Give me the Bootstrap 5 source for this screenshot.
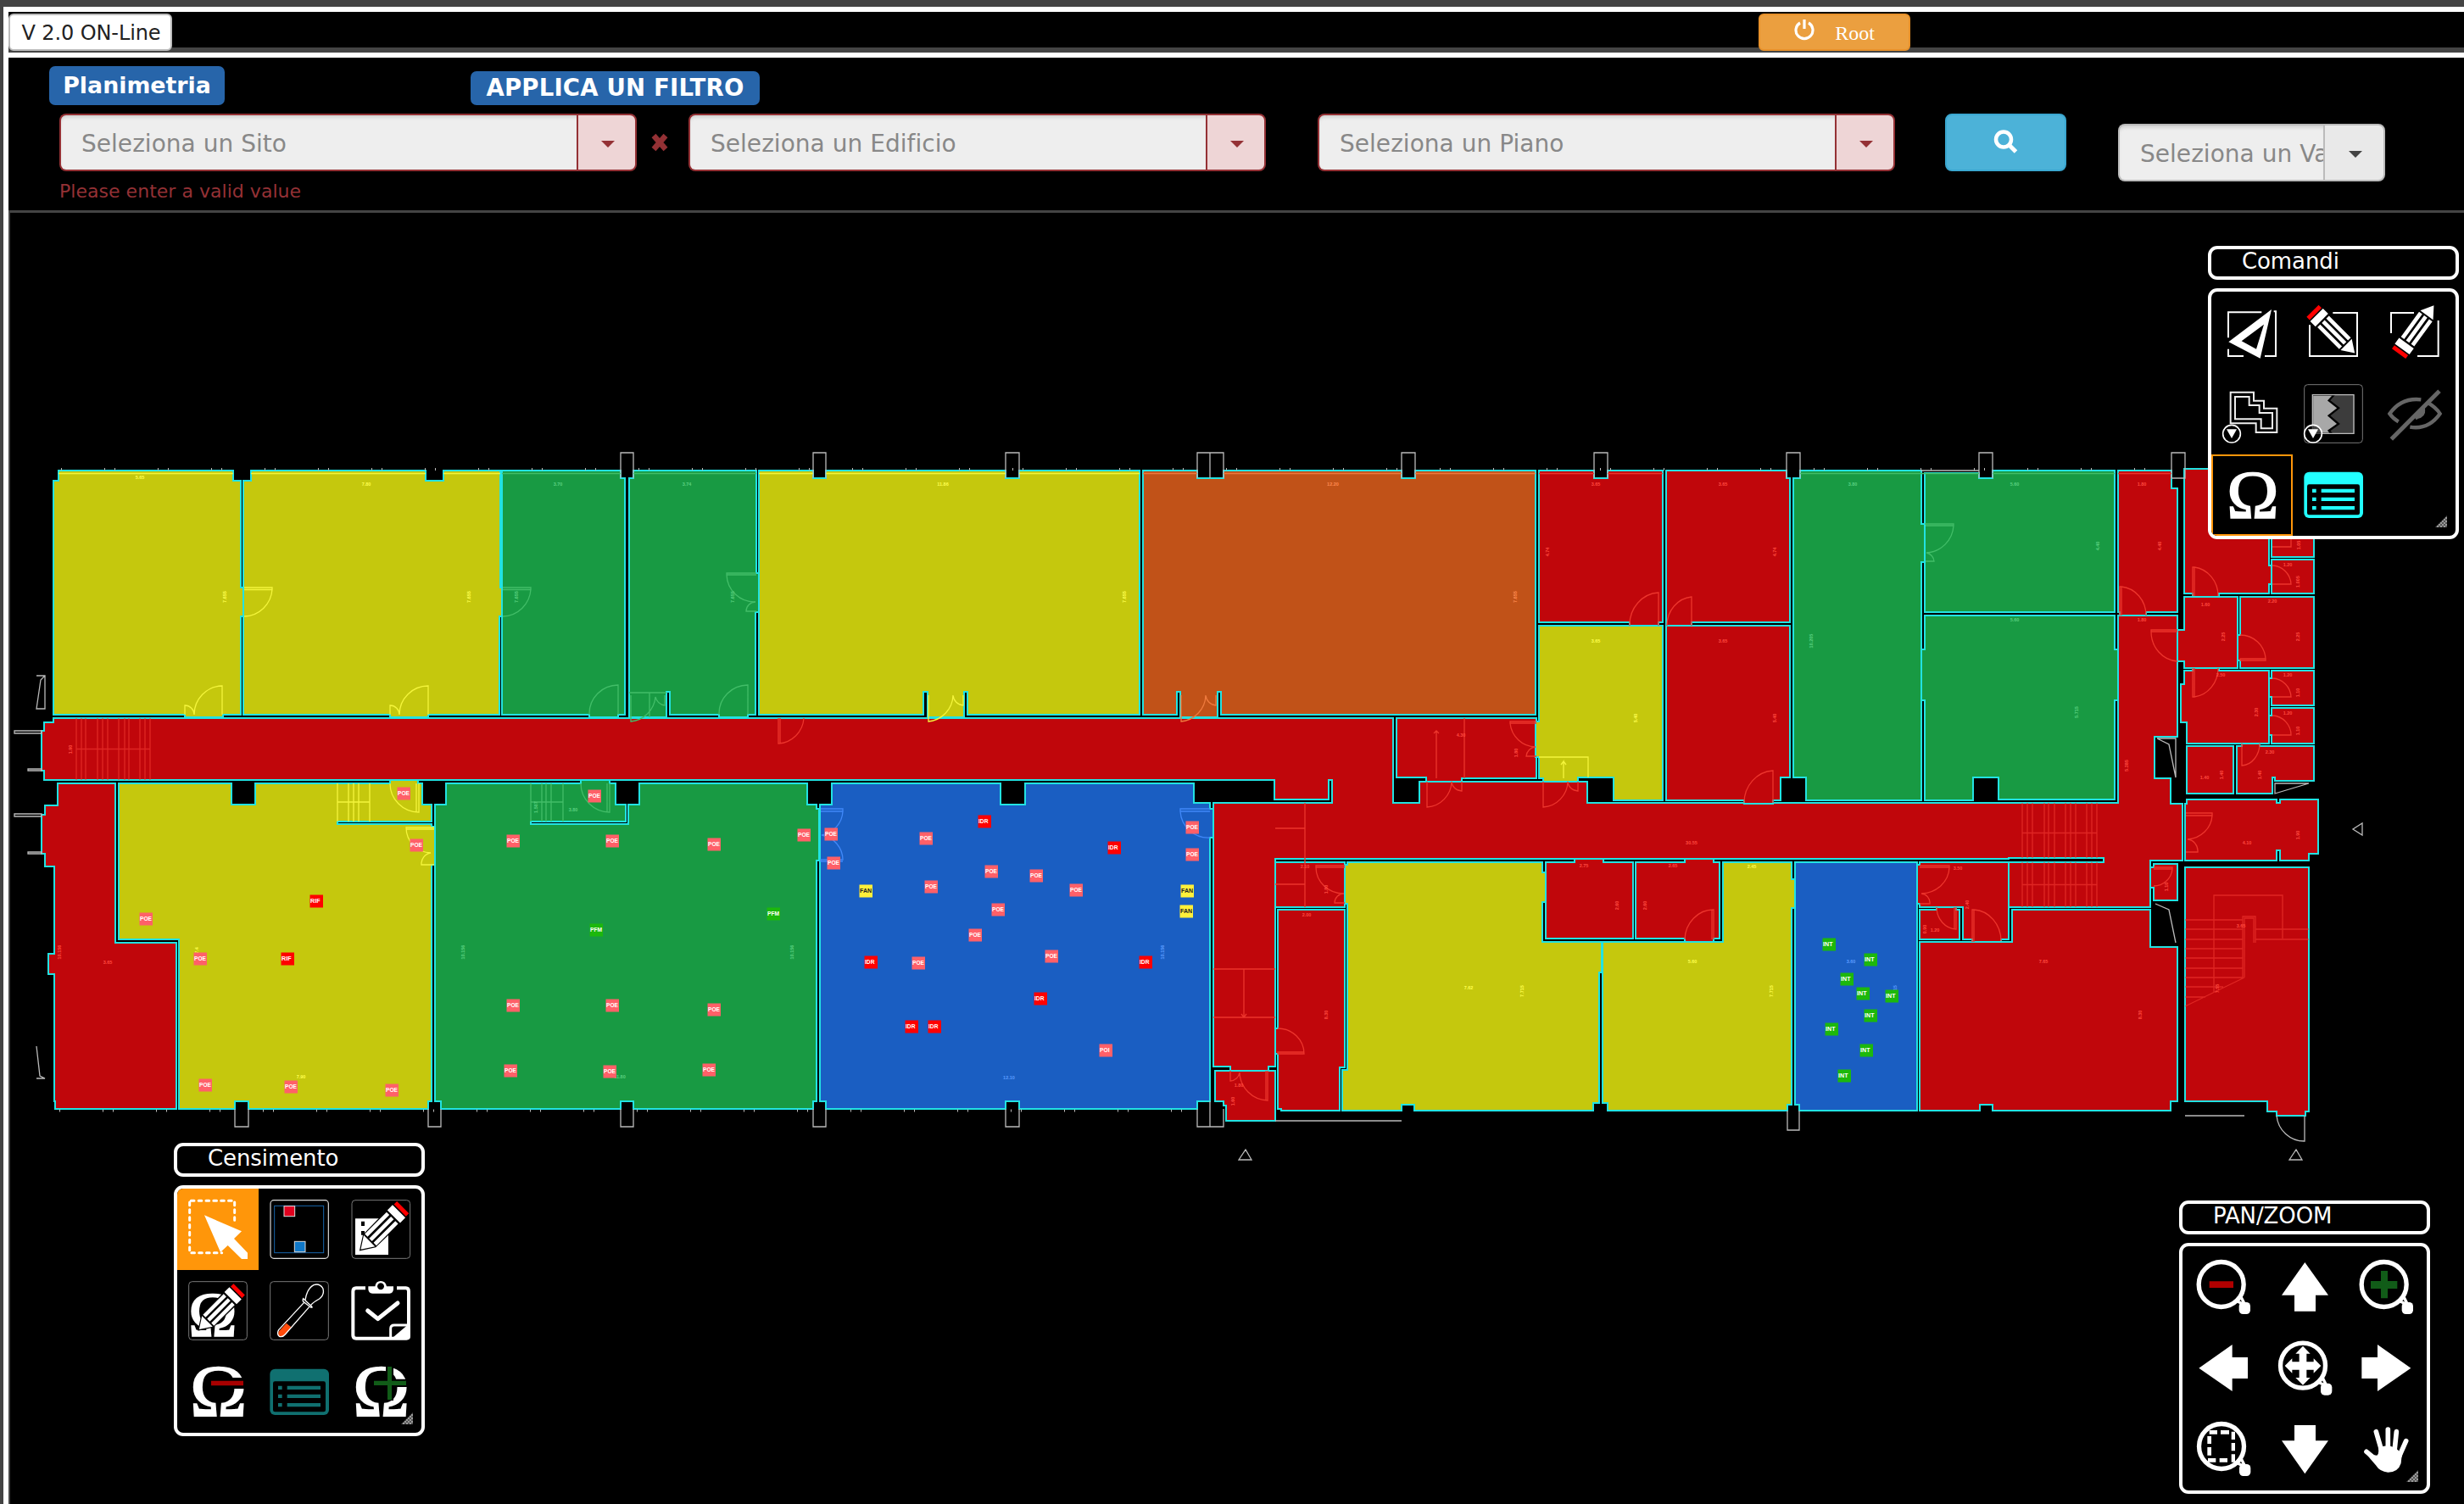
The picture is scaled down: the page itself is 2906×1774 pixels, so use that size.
<!DOCTYPE html>
<html lang="it">
<head>
    <meta charset="UTF-8">
    <meta name="viewport" content="width=device-width, initial-scale=1.0">
    <title>Planimetria</title>
    <link href="https://cdn.jsdelivr.net/npm/bootstrap@5.3.3/dist/css/bootstrap.min.css" rel="stylesheet">
    <style>
        body { background: #444; font-family: Verdana, "DejaVu Sans", sans-serif; padding: 8px 0 0 4px; height: 1774px; overflow: hidden; }
        .frame { border-left: 6px solid #fff; height: 1766px; }
        .topbar { height: 60px; background: #000; border-top: 6px solid #fff; border-bottom: 6px solid #fff; box-shadow: inset 0 -6px #444; padding-top: 2px; }
        .btn-version { width: 193px; height: 44px; font-size: 24px; padding: 1px 0 0 2px; background: #fff; border: 2px solid #bbb; border-radius: 6px; color: #222; line-height: 38px; letter-spacing: -.1px; }
        .btn-root { width: 179px; height: 44px; margin-left: 1871px; background: #eb9f3f; border: 2px solid #e8912a; border-radius: 6px; color: #fff; font: 24px "Liberation Serif", serif; padding: 3px 0 0; }
        .btn-root:hover { background: #eb9f3f; }
        .filters { height: 180px; background: #000; padding-top: 10px; }
        .tag-title { background: #2765aa; color: #fff; font-size: 26.8px; font-weight: bold; border-radius: 7px; height: 46px; width: 207px; line-height: 45px; }
        .tag-filter { width: 341px; height: 40px; line-height: 39px; font-size: 27.5px; margin-left: 290px; letter-spacing: .2px; }
        .combo { width: 681px; height: 68px; }
        .combo .form-control { background: #eee; border: 2px solid #943135; border-right: 0; border-radius: 8px 0 0 8px; font-size: 28px; letter-spacing: .03px; padding: 3px 0 0 24px; box-shadow: inset 0 4px 4px -2px #ccc; }
        .combo .form-control::placeholder { color: #888; opacity: 1; }
        .combo .btn { width: 71px; background: #eed5d6; border: 2px solid #943135; border-radius: 0 8px 8px 0; color: #943135; padding: 3px 0 0 2px; }
        .combo-plain { width: 315px; margin: 12px 0 0 61px; }
        .combo-plain .form-control { border-color: #bbb; }
        .combo-plain .btn { background: #e9e9e9; border-color: #bbb; color: #444; width: 73px; }
        .invalid-mark { width: 61px; padding: 23px 0 0 17px; }
        .btn-find { width: 143px; height: 68px; margin-left: 59px; background: #4cb2d8; border: 2px solid #3aa7d0; border-radius: 8px; }
        .error-text { color: #943135; font-size: 22px; line-height: 26px; margin: -1px 0 0 60px; letter-spacing: .03px; }
        .plan { height: 1526px; background: #000; border: solid #444; border-width: 3px 0 0 2px; }
        .plan-drawing { display: block; }

        .palette { position: absolute; width: 296px; }
        .palette-title { height: 40px; border: 4px solid #fff; border-radius: 11px; color: #fff; background: #000; font-size: 26px; line-height: 28px; padding-left: 36px; margin-bottom: 10px; letter-spacing: -.1px; }
        .palette-grid { height: 296px; border: 4px solid #fff; border-radius: 11px; background: #000; display: grid; grid-template-columns: repeat(3, 96px); grid-auto-rows: 96px; overflow: hidden; position: relative; }
        .palette-grid svg { width: 96px; height: 96px; display: block; }
        .grip { position: absolute; right: 10px; bottom: 10px; width: 14px; height: 14px; background: repeating-conic-gradient(#999 0 25%, #555 0 50%) 0 0 / 4px 4px; clip-path: polygon(100% 0, 100% 100%, 0 100%); }
        .tool-on { box-shadow: inset 0 0 0 2px #ff960a; }
        .tool-select { background: #ff960a; }
        .omega { font-family: "Liberation Serif", serif; fill: #fff; stroke: #fff; stroke-width: 5; }

        /* room fills */
        .y { fill: #c5c80d; } .g { fill: #189a43; } .r { fill: #c0060b; } .b { fill: #1a5ec2; } .o { fill: #c15218; }
        .rooms path { stroke: #22e2e2; stroke-width: 2; }
        /* doors, stairs and dimension text, lighter than the room */
        .ink path { fill: none; stroke-width: 1.3; }
        .ink text { font: bold 5.5px "Liberation Sans", sans-serif; text-anchor: middle; }
        .iy { stroke: #f4f53c; } .ig { stroke: #42bd68; } .ir { stroke: #ec352d; } .ib { stroke: #4088f8; } .io { stroke: #ee7a3e; }
        text.iy { fill: #ffff50; stroke: none; } text.ig { fill: #5ad080; stroke: none; } text.ir { fill: #ff4a40; stroke: none; } text.ib { fill: #5a9cff; stroke: none; } text.io { fill: #ff8a50; stroke: none; }
        .outer { fill: none; stroke: #bbb; stroke-width: 1.3; }
        .device text { font: bold 7.5px "Liberation Sans", sans-serif; }
    </style>
</head>
<body>
    <svg width="0" height="0" class="position-absolute">
        <defs>
            <g id="pencil">
                <path d="M6-34H42L160-32L210 0L160 32L42 34H6Z" fill="#000"/>
                <rect x="-8" y="-30" width="15" height="60" fill="#f00"/>
                <path fill="#fff" d="M12-32H38V32H12ZM45-29H154V-15H45ZM45-7H154V7H45ZM45 15H154V29H45ZM160-28L203 0L160 28Z"/>
            </g>
            <g id="lens">
                <circle r="79.500" fill="none" stroke="#fff" stroke-width="16"/>
                <path d="M52 58L84 72M70 44L84 72" stroke="#fff" stroke-width="10"/>
                <rect x="63" y="63" width="40" height="42" rx="14" fill="#fff"/>
            </g>
            <g id="badge">
                <circle r="31" fill="#000" fill-opacity=".6" stroke="#fff" stroke-width="5"/>
                <path d="M-18-16H18L0 16Z" fill="#fff"/>
            </g>
            <g id="list">
                <rect width="209" height="163" rx="18"/>
                <rect x="11" y="44" width="186" height="108" rx="7" fill="#000"/>
                <path d="M29 60h14v13h-14zM61 60h118v13h-118zM29 90h14v13h-14zM61 90h118v13h-118zM29 121h14v13h-14zM61 121h118v13h-118z"/>
            </g>
        </defs>
    </svg>

    <div class="frame">
        <div class="topbar d-flex">
            <button class="btn btn-version">V 2.0 ON-Line</button>
            <button class="btn btn-root d-flex justify-content-center align-items-center gap-4">
                <svg width="24" height="26" viewBox="0 0 24 26" style="margin-top:-9px"><path d="M7 5A10 10 0 1 0 17 5M12 1V12" fill="none" stroke="#fff" stroke-width="3.200"/></svg>
                Root
            </button>
        </div>

        <div class="filters">
            <div class="d-flex align-items-end" style="padding-left:48px">
                <div class="tag-title text-center">Planimetria</div>
                <div class="tag-title tag-filter text-center">APPLICA UN FILTRO</div>
            </div>
            <div class="d-flex align-items-start" style="padding:10px 0 0 60px">
                <div class="input-group combo flex-nowrap">
                    <input class="form-control" placeholder="Seleziona un Sito">
                    <button class="btn"><svg width="16" height="8"><path d="M0 0H16L8 8Z" fill="currentColor"/></svg></button>
                </div>
                <div class="invalid-mark"><svg width="20" height="22" viewBox="0 0 20 22" class="d-block"><path d="M3 3L17 19M17 3L3 19" stroke="#943135" stroke-width="6.500"/></svg></div>
                <div class="input-group combo flex-nowrap">
                    <input class="form-control" placeholder="Seleziona un Edificio">
                    <button class="btn"><svg width="16" height="8"><path d="M0 0H16L8 8Z" fill="currentColor"/></svg></button>
                </div>
                <div class="input-group combo flex-nowrap" style="margin-left:61px">
                    <input class="form-control" placeholder="Seleziona un Piano">
                    <button class="btn"><svg width="16" height="8"><path d="M0 0H16L8 8Z" fill="currentColor"/></svg></button>
                </div>
                <button class="btn btn-find p-0"><svg width="30" height="30" viewBox="0 0 30 30"><circle cx="12" cy="11.500" r="9" fill="none" stroke="#fff" stroke-width="4.500"/><path d="M18.500 18L26.500 26" stroke="#fff" stroke-width="5"/></svg></button>
                <div class="input-group combo combo-plain flex-nowrap">
                    <input class="form-control" placeholder="Seleziona un Valore">
                    <button class="btn"><svg width="16" height="8"><path d="M0 0H16L8 8Z" fill="currentColor"/></svg></button>
                </div>
            </div>
            <div class="error-text">Please enter a valid value</div>
        </div>

        <div class="plan">
            <svg class="plan-drawing" width="2894" height="1523" viewBox="12 251 2894 1523">
                <g class="rooms">
                    <path class="y" d="M69 555H275V567H284V693H287V727H284V843H263V846H218V843H63V567H69Z"/>
                    <path class="y" d="M296 555H502V567H523V555H590V693H592V727H589V843H505V846H460V843H287V567H296Z"/>
                    <path class="g" d="M592 555H732V564H737V843H729V846H695V843H592Z"/>
                    <path class="g" d="M747 555H892V676H895V722H891V843H882V846H848V843H790V816H786V846H742V564H747Z"/>
                    <path class="y" d="M895 555H959V564H974V555H1186V564H1202V555H1344V843H1141V816H1137V846H1094V816H1089V843H895Z"/>
                    <path class="o" d="M1348 555H1412V564H1443V555H1653V564H1669V555H1811V843H1440V816H1436V846H1392V816H1388V843H1348Z"/>
                    <path class="r" d="M63 847H1643V947H1674V922H1872V947H2498V726H2568V869H2541V918H2560V948H2574V1015H2536V1070H2369V1017H2481V1012H2369V1013H1504V1258H1496V1263H1451V1258H1431V947H1571V920H1567V943H1503V920H52V909H49V862H52V852H63Z"/>
                    <path class="r" d="M1647 847H1812V918H1724V922H1682V917H1647Z"/>
                    <path class="r" d="M1815 555H1880V564H1896V555H1961V734H1956V738H1922V734H1815Z"/>
                    <path class="r" d="M1965 555H2107V564H2111V734H1995V738H1965Z"/>
                    <path class="y" d="M1815 738H1961V944H1903V917H1861V922H1820V918H1815V893H1811V851H1815Z"/>
                    <path class="r" d="M1965 738H2111V917H2100V944H2091V948H2057V944H1965Z"/>
                    <path class="g" d="M2123 555H2266V618H2270V663H2266V944H2130V917H2115V564H2123Z"/>
                    <path class="g" d="M2270 558H2334V564H2350V555H2494V722H2270Z"/>
                    <path class="g" d="M2270 726H2494V766H2498V826H2494V943H2357V917H2327V944H2270V826H2266V766H2270Z"/>
                    <path class="r" d="M2498 555H2561V576H2568V722H2531V726H2500V722H2498Z"/>
                    <path class="r" d="M2576 553H2676V667H2679V689H2676V700H2617V704H2586V700H2576Z"/>
                    <path class="r" d="M2679 600H2729V657H2679Z"/>
                    <path class="r" d="M2679 660H2729V700H2679Z"/>
                    <path class="r" d="M2576 704H2639V788H2576V780H2568V743H2576Z"/>
                    <path class="r" d="M2642 704H2729V788H2642V779H2639V749H2642Z"/>
                    <path class="r" d="M2576 791H2586V788H2617V791H2676V877H2579V852H2572V807H2576Z"/>
                    <path class="r" d="M2679 791H2729V832H2679V822H2676V800H2679Z"/>
                    <path class="r" d="M2679 835H2729V877H2679V867H2676V844H2679Z"/>
                    <path class="r" d="M2579 880H2634V936H2579Z"/>
                    <path class="r" d="M2638 880H2644V877H2665V880H2729V921H2683V917H2680V936H2638Z"/>
                    <path class="r" d="M2579 943H2685V947H2689V943H2734V1007H2723V1015H2689V1003H2685V1015H2577V948H2579Z"/>
                    <path class="r" d="M2577 1023H2723V1311H2719V1316H2685V1311H2674V1299H2577Z"/>
                    <path class="r" d="M2540 1019H2568V1062H2540V1047H2536V1023H2540Z"/>
                    <path class="r" d="M2373 1073H2536V1117H2568V1299H2560V1310H2350V1303H2335V1310H2264V1111H2373Z"/>
                    <path class="r" d="M2264 1017H2369V1108H2360V1111H2326V1108H2315V1070H2264V1066H2261V1020H2264Z"/>
                    <path class="r" d="M2264 1073H2284V1070H2307V1073H2311V1108H2264Z"/>
                    <path class="b" d="M2117 1017H2261V1310H2122V1303H2117Z"/>
                    <path class="y" d="M2032 1017H2113V1037H2117V1071H2113V1303H2108V1310H1896V1301H1890V1111H2032Z"/>
                    <path class="y" d="M1589 1017H1819V1029H1823V1064H1819V1111H1889V1147H1886V1301H1879V1310H1668V1303H1653V1310H1583V1262H1589V1066H1586V1020H1589Z"/>
                    <path class="r" d="M1823 1017H1857V1013H1891V1017H1926V1107H1823Z"/>
                    <path class="r" d="M1929 1017H1987V1013H2021V1017H2028V1107H2021V1111H1987V1107H1929Z"/>
                    <path class="r" d="M1504 1017H1586V1070H1504Z"/>
                    <path class="r" d="M1507 1073H1586V1259H1580V1310H1511V1308H1507V1243H1504V1213H1507Z"/>
                    <path class="r" d="M1433 1263H1504V1322H1446V1304H1443V1299H1433Z"/>
                    <path class="b" d="M981 924H1180V949H1209V924H1408V947H1427V954H1431V988H1427V1299H1412V1308H1202V1299H1186V1308H974V1299H967V949H981Z"/>
                    <path class="g" d="M526 924H685V920H719V924H726V949H738V969H626V972H741V949H754V924H952V949H963V954H966V1015H963V1299H959V1308H747V1299H732V1308H520V1299H513V949H526Z"/>
                    <path class="y" d="M140 924H273V949H301V924H460V920H493V924H498V949H509V969H398V972H509V975H513V1020H509V1299H505V1308H293V1299H277V1308H211V1108H140Z"/>
                    <path class="r" d="M68 924H136V1112H208V1308H65V1299H64V1149H57V1125H64V1022H53V1007H49V961H53V950H68Z"/>
                </g>

                <!-- pillars, steps and entrance arrows outside the rooms -->
                <path class="outer" d="M732 564V534H747V564M959 564V534H974V564M1186 564V534H1202V564M1412 564V534H1443V564M1427 534V564M1653 564V534H1669V564M1880 564V534H1896V564M2107 564V534H2123V564M2334 564V534H2350V564M2561 564V534H2577V564H2561
                    M277 1308V1329H293V1308M505 1308V1329H520V1308M732 1308V1329H747V1308M959 1308V1329H974V1308M1186 1308V1329H1202V1308M1412 1308V1329H1443V1308M1427 1299V1329M2108 1310V1333H2122V1310
                    M43 797H53V836H43L48 802L53 797M17 862H49V865H17ZM33 907H49V909H33ZM17 960H49V963H17ZM33 1005H49V1007H33ZM43 1234L47 1269L53 1272H43
                    M1504 1322H1653M2577 1316H2647M2685 1316A33 33 0 0 0 2718 1346V1316
                    M2544 871H2566V917L2558 878ZM2683 924H2723L2683 936ZM2542 1066L2558 1073L2566 1112M2266 555H2334
                    M2786 971V985L2775 978ZM2700 1368H2715L2708 1356ZM1461 1368H1476L1469 1356Z"/>
                <path stroke="#bbb" stroke-width="3" stroke-dasharray="1 50 1 11" d="M72 553.500H2560M70 1310H1410"/>

                <g class="ink">
                    <path class="iy" d="M69 558.500H275M296 558.500H502M523 558.500H590M895 558.500H959M974 558.500H1186M1202 558.500H1344
                        M288 693H321V695.500H288M321 695A34 34 0 0 1 288 727M262 843V809A34 34 0 0 0 229 843A11 11 0 0 0 218 832V843M505 843V809A34 34 0 0 0 471 843A11 11 0 0 0 460 832V843
                        M1095 820V851A32 32 0 0 0 1124 820A13 13 0 0 0 1136 832V820
                        M398 924V969M411 924V969M417 924V969M423 924V969M436 924V969M398 946H436M494 924V958A34 34 0 0 1 460 924M491 924V958
                        M512 976H479A30 30 0 0 0 508 1006A13 13 0 0 0 497 1020H512M479 978H512M1815 893H1873V917M1844 918V898L1841 902M1844 898L1847 902"/>
                    <path class="ig" d="M592 558.500H732M747 558.500H892M2123 558.500H2334M2350 558.500H2494M593 693H626V695.500H593M626 695A34 34 0 0 1 593 727M729 843V808A34 34 0 0 0 695 843
                        M892 676H857V678H892M857 678A33 33 0 0 0 891 710A11 11 0 0 0 880 721H892M882 843V808A34 34 0 0 0 848 843M742 817H786M766 817V846M744 820V851A32 32 0 0 0 773 822A13 13 0 0 0 784 832V820
                        M626 924V969M639 924V969M644 924V969M650 924V969M664 924V969M626 946H664M719 924V958A34 34 0 0 1 685 924M716 924V958
                        M2270 618H2304V620H2271M2304 620A34 34 0 0 1 2272 652A11 11 0 0 1 2281 662H2271"/>
                    <path class="io" d="M1348 558.500H1412M1443 558.500H1653M1669 558.500H1811M1393 820V851A32 32 0 0 0 1422 820A13 13 0 0 0 1434 832V820"/>
                    <path class="ib" d="M968 954H994V957H968M994 957A30 30 0 0 1 969 985A30 30 0 0 1 994 1014H968V1016H994M1427 954H1392V957H1427M1392 957A33 33 0 0 0 1427 988"/>
                    <path class="ir" d="M1815 558.500H1880M1896 558.500H1961M2498 558.500H2561M918 847V877A32 32 0 0 0 948 847M920 847V877M1694 918V862M1691 865L1694 862L1697 865M1727 847V918
                        M1812 851H1781V853H1812M1781 853A31 31 0 0 0 1811 881A12 12 0 0 0 1800 892H1812M1683 922V952A31 31 0 0 0 1712 922A12 12 0 0 0 1724 933V922M1820 922V952A31 31 0 0 0 1849 922A12 12 0 0 0 1861 933V922
                        M1956 738V699A36 38 0 0 0 1922 738M1995 738V704A32 34 0 0 0 1966 738M2091 947V909A36 38 0 0 0 2057 947M2502 726V692H2500V726M2502 692A32 34 0 0 1 2531 726M2568 743H2537V745H2568M2537 745A33 35 0 0 0 2568 780
                        M2588 703V669H2586V703M2588 669A32 34 0 0 1 2616 703M2680 667A23 23 0 0 1 2702 689H2680M2702 636V645H2680M2642 749A30 30 0 0 1 2672 777H2642V779H2672V777M2588 788V822H2586V788M2588 822A32 34 0 0 0 2616 788
                        M2680 800A23 23 0 0 1 2702 822H2680M2680 844A23 23 0 0 1 2702 867H2680M2644 877V903A22 26 0 0 0 2665 877
                        M2578 959H2609V962H2578M2609 962A31 30 0 0 1 2580 990A13 14 0 0 1 2592 1005H2578M2540 1023H2562V1025H2540M2562 1025A22 22 0 0 1 2540 1045
                        M2264 1021H2299V1023H2264M2299 1023A34 32 0 0 1 2266 1054A11 11 0 0 1 2276 1066H2264M2307 1070V1096A24 26 0 0 1 2284 1070M2305 1070V1096M2328 1111V1073H2326V1111M2328 1073A34 37 0 0 1 2360 1110M2021 1108V1073A34 36 0 0 0 1987 1108M2019 1108V1073
                        M1586 1021H1552V1023H1586M1552 1023A33 31 0 0 0 1585 1054A11 11 0 0 0 1574 1065H1586M1539 947V1070M1504 977H1539M1504 1043H1539M1431 1143H1504M1431 1200H1504M1467 1143V1200M1464 1196L1467 1200L1470 1196
                        M1507 1213A31 30 0 0 1 1538 1243H1507V1241H1538M1451 1263V1275A12 12 0 0 0 1462 1265A34 34 0 0 0 1495 1298V1263M1493 1263V1298"/>
                    <path class="ir" opacity=".7" d="M90 847V920M96 847V920M101 847V920M115 847V920M121 847V920M127 847V920M140 847V920M147 847V920M152 847V920M165 847V920M171 847V920M177 847V920M90 883.500H177
                        M2385 947V1012M2391 947V1012M2397 947V1012M2411 947V1012M2416 947V1012M2423 947V1012M2436 947V1012M2442 947V1012M2448 947V1012M2461 947V1012M2467 947V1012M2473 947V1012M2385 982.500H2473
                        M2385 1017V1070M2391 1017V1070M2397 1017V1070M2411 1017V1070M2416 1017V1070M2423 1017V1070M2436 1017V1070M2442 1017V1070M2448 1017V1070M2461 1017V1070M2467 1017V1070M2473 1017V1070M2385 1043.500H2473
                        M2611 1170V1056H2692V1107M2577 1085H2645M2577 1096H2645M2577 1108H2645M2577 1119H2645M2577 1130H2645M2577 1142H2645M2577 1153H2645M2577 1164H2622M2577 1176H2601M2647 1153L2577 1187M2645 1153V1081H2660V1112M2647 1153V1083H2658V1112M2660 1096H2723M2660 1108H2723"/>
                    <g id="dims"></g>
                </g>
                <g id="devices" class="device"></g>
            </svg>
        </div>
    </div>

    <div class="palette" style="left:2604px;top:290px">
        <div class="palette-title">Comandi</div>
        <div class="palette-grid">
            <svg viewBox="54 192 288 288"><path d="M232 265H114V355M114 395V420H168M243 420H282V262H275" fill="none" stroke="#fff" stroke-width="6"/><path fill="#fff" fill-rule="evenodd" d="M267 255L227 428L115 370ZM240 308L161 367L213 395Z"/></svg>
            <svg viewBox="342 192 288 288"><path d="M484 267H570V420H402V310" fill="none" stroke="#fff" stroke-width="6"/><use href="#pencil" transform="translate(418 266) rotate(45)"/></svg>
            <svg viewBox="630 192 288 288"><path d="M771 267H690V339M783 420H857V294" fill="none" stroke="#fff" stroke-width="6"/><use href="#pencil" transform="translate(722 405) rotate(-54)"/></svg>
            <svg viewBox="54 480 288 288"><path d="M122 548H204V578H240V605H286V690H212V658H122ZM138 564H188V594H224V621H270V676H230V643H138Z" fill="none" stroke="#eee" stroke-width="6"/><use href="#badge" x="126" y="695"/></svg>
            <svg viewBox="342 480 288 288"><rect x="383" y="521" width="206" height="206" rx="12" fill="none" stroke="#777" stroke-width="3"/><path fill="#3c3c3c" d="M411 557H560V695H411Z"/><path fill="#a8a8a8" stroke="#000" stroke-width="7" d="M411 557H488L470 577L504 604L470 631L504 660L470 684L480 695H411Z"/><path d="M412 557H558V694H412Z" fill="none" stroke="#bbb" stroke-width="4"/><use href="#badge" x="414" y="695"/></svg>
            <svg viewBox="630 480 288 288" fill="none" stroke="#666" stroke-width="13"><path d="M716 652Q696 640 685 624Q726 566 796 574M818 584Q850 602 863 624Q822 682 757 671"/><path d="M776 640L804 612Q806 630 782 636Z" fill="#666"/><path d="M691 714L861 544" stroke-width="15"/></svg>
            <svg class="tool-on" viewBox="54 768 288 288"><text class="omega" x="109" y="992" font-size="240" textLength="184" lengthAdjust="spacingAndGlyphs">Ω</text></svg>
            <svg viewBox="342 768 288 288"><use href="#list" x="382" y="830" fill="#22ffff"/></svg>
            <div class="grip"></div>
        </div>
    </div>

    <div class="palette" style="left:205px;top:1348px">
        <div class="palette-title">Censimento</div>
        <div class="palette-grid">
            <svg class="tool-select" viewBox="57 216 288 288"><path d="M106 259H260V330M101 264V443H215" fill="none" stroke="#fff" stroke-width="9" stroke-dasharray="11 15.500" stroke-linecap="round"/><path fill="#fff" d="M153 310L285 367L258 393L306 443V465H285L236 417L210 441Z"/></svg>
            <svg viewBox="345 216 288 288" fill="none"><rect x="387" y="257" width="205" height="206" rx="12" stroke="#ddd" stroke-width="3.500"/><rect x="401" y="277" width="174" height="166" stroke="#1665ac" stroke-width="3"/><rect x="435" y="278" width="38" height="36" fill="#e0001e" stroke="#ddd" stroke-width="3"/><rect x="472" y="403" width="38" height="37" fill="#1078c8" stroke="#ddd" stroke-width="3"/></svg>
            <svg viewBox="633 216 288 288"><rect x="675" y="257" width="206" height="206" rx="12" fill="none" stroke="#777" stroke-width="3"/><path fill="#fff" d="M687 322H804V450H687Z"/><path d="M708 332H720V348H708ZM708 366H720V380H708Z"/><use href="#pencil" transform="translate(850 288) rotate(135)"/></svg>
            <svg viewBox="57 504 288 288"><rect x="98" y="545" width="206" height="206" rx="12" fill="none" stroke="#777" stroke-width="3"/><text class="omega" x="97" y="737" font-size="220" textLength="172" lengthAdjust="spacingAndGlyphs">Ω</text><use href="#pencil" transform="translate(271 578) rotate(135) scale(.95)"/></svg>
            <svg viewBox="345 504 288 288" fill="none"><rect x="386" y="545" width="206" height="206" rx="12" stroke="#777" stroke-width="3"/><path fill="#ff4a0a" d="M443 692L416 722Q410 738 425 740Q433 738 438 732L460 706Z"/><path stroke="#fff" stroke-width="4" d="M505 620L416 716Q408 730 418 739Q430 743 439 732L524 635M503 605L532 632Q538 638 529 636L503 616Q500 610 503 605ZM510 610Q516 570 540 557Q560 550 572 568Q580 590 560 606Q538 618 530 628"/></svg>
            <svg viewBox="633 504 288 288" fill="none" stroke="#fff" stroke-width="12"><path d="M723 568H690Q679 568 679 580V735Q679 746 690 746H868Q876 746 876 738V580Q876 568 866 568H834"/><path fill="#fff" stroke="none" fill-rule="evenodd" d="M733 562H757Q760 543 777 543T798 562H822V573Q820 587 808 587H748Q735 587 733 573ZM777 550A12 12 0 1 0 777.100 550Z"/><path stroke-width="15" stroke-linejoin="round" stroke-linecap="round" d="M731 648L767 677L837 621"/><path stroke-width="9" d="M812 746V712Q812 699 825 699H876"/><path fill="#fff" stroke="none" d="M868 702H880V746H816Z"/></svg>
            <svg viewBox="57 792 288 288"><text class="omega" x="102" y="1020" font-size="258" textLength="202" lengthAdjust="spacingAndGlyphs">Ω</text><path d="M172 885H300V924H172Z"/><path fill="#a80000" d="M177 896H291V913H177Z"/></svg>
            <svg viewBox="345 792 288 288"><use href="#list" x="385" y="854" fill="#107070"/></svg>
            <svg viewBox="633 792 288 288"><text class="omega" x="678" y="1020" font-size="258" textLength="202" lengthAdjust="spacingAndGlyphs">Ω</text><path d="M795 840H822V890H872V918H822V966H795V918H750V890H795Z"/><path fill="#115c18" d="M801 846H816V896H867V912H816V963H801V912H753V896H801Z"/></svg>
            <div class="grip"></div>
        </div>
    </div>

    <div class="palette" style="left:2570px;top:1416px">
        <div class="palette-title">PAN/ZOOM</div>
        <div class="palette-grid">
            <svg viewBox="72 210 288 288"><use href="#lens" x="209" y="345"/><path fill="#b00000" d="M167 334H252V357H167Z"/></svg>
            <svg viewBox="360 210 288 288"><path fill="#fff" d="M505 267L588 383H543V440H468V383H423Z"/></svg>
            <svg viewBox="648 210 288 288"><use href="#lens" x="785" y="345"/><path fill="#115c18" d="M774 297H798V333H832V360H798V394H774V360H738V333H774Z"/></svg>
            <svg viewBox="72 498 288 288"><path fill="#fff" d="M130 641L248 558V603H303V678H248V723Z"/></svg>
            <svg viewBox="360 498 288 288"><use href="#lens" x="498" y="632"/><path fill="#fff" d="M498 563L524 590H511V619H536V607L562 633L536 659V647H511V675H524L498 701L472 675H485V647H460V659L434 633L460 607V619H485V590H472Z"/></svg>
            <svg viewBox="648 498 288 288"><path fill="#fff" d="M880 641L762 558V603H706V678H762V723Z"/></svg>
            <svg viewBox="72 786 288 288"><use href="#lens" x="210" y="918"/><path fill="#fff" d="M167 861H195V875H167ZM207 861H237V875H207ZM245 866H258V894H245ZM245 906H258V934H245ZM245 946H258V974H245ZM160 882H174V909H160ZM160 921H174V950H160ZM162 960H190V974H162ZM203 960H231V974H203Z"/></svg>
            <svg viewBox="360 786 288 288"><path fill="#fff" d="M505 1015L588 898H543V843H468V898H423Z"/></svg>
            <svg viewBox="648 786 288 288"><g stroke="#fff" stroke-linecap="round" fill="none"><path stroke-width="17" d="M723 937L768 974M757 866L777 935M799 858V930M829 866L822 935M863 899L838 955"/></g><path fill="#fff" d="M765 925Q800 905 833 930L850 945Q846 960 845 978Q835 1010 799 1010Q770 1008 756 985L722 945L760 950Q768 945 765 925Z"/></svg>
            <div class="grip"></div>
        </div>
    </div>

    <script src="https://cdn.jsdelivr.net/npm/bootstrap@5.3.3/dist/js/bootstrap.bundle.min.js"></script>
    <script>
        // device type: [fill, text colour, list of centres]
        const devices = {
            POE: ['#ff6068', '#fff', [[476,936],[701,939],[491,997],[172,1084],[236,1131],[242,1280],[343,1282],[462,1286],[605,992],[722,992],[842,996],[948,985],[605,1186],[722,1186],[842,1191],[602,1263],[719,1264],[836,1262],
                [980,984],[983,1018],[1092,989],[1098,1046],[1169,1028],[1222,1033],[1269,1050],[1177,1073],[1150,1103],[1083,1136],[1240,1128],[1406,976],[1406,1008]]],
            POI: ['#ff6068', '#fff', [[1304,1239]]],
            RIF: ['#ff0000', '#fff', [[373,1063],[339,1131]]],
            IDR: ['#ff0000', '#fff', [[1161,969],[1314,1000],[1027,1135],[1351,1135],[1227,1178],[1075,1211],[1102,1211]]],
            PFM: ['#1cb80c', '#fff', [[703,1097],[912,1078]]],
            FAN: ['#fff03a', '#222', [[1021,1051],[1400,1051],[1399,1075]]],
            INT: ['#1cb80c', '#fff', [[2157,1114],[2206,1132],[2178,1155],[2197,1172],[2231,1175],[2206,1198],[2160,1214],[2201,1239],[2175,1269]]]
        };

        // dimension labels: colour, text, x, y, vertical
        const dims = [
            ['y','5.65',165,563],['y','7.80',432,571],['g','3.70',658,571],['g','3.74',810,571],['y','11.86',1112,571],['o','12.20',1572,571],
            ['y','7.655',265,704,1],['y','7.655',553,704,1],['g','7.655',609,704,1],['g','7.655',864,704,1],['y','7.655',1326,704,1],['o','7.655',1787,704,1],
            ['r','3.65',1882,571],['r','3.65',2032,571],['g','3.80',2185,571],['g','5.60',2376,571],['r','1.80',2526,571],['r','4.74',1825,651,1],['r','4.74',2093,651,1],
            ['g','4.40',2474,644,1],['r','4.40',2547,644,1],['y','3.65',1882,756],['r','3.65',2032,756],['g','10.205',2136,756,1],['g','5.60',2376,731],['r','1.80',2526,731],
            ['y','5.40',1929,847,1],['r','5.40',2093,847,1],['g','5.715',2449,840,1],['r','5.385',2508,903,1],['r','1.05',2711,643,1],['r','1.20',2698,666],['r','1.005',2710,686,1],
            ['r','1.60',2601,713],['r','2.20',2680,709],['r','2.25',2622,751,1],['r','2.25',2710,751,1],['r','2.50',2619,796],['r','1.20',2698,796],['r','1.10',2710,817,1],['r','2.30',2661,840,1],['r','1.20',2698,841],['r','1.10',2710,862,1],
            ['r','1.40',2600,917],['r','1.40',2620,914,1],['r','1.40',2665,914,1],['r','2.30',2677,887],['r','1.90',83,884,1],['r','4.30',1723,867],['r','1.80',1788,888,1],
            ['r','10.156',70,1123,1],['r','3.65',127,1135],['y','7.90',355,1270],['y','7.4',232,1121,1],['g','10.156',546,1123,1],['g','10.156',934,1123,1],['g','11.80',731,1270],['g','3.80',676,955],['g','1.507',632,952,1],
            ['b','12.10',1190,1271],['b','10.156',1371,1123,1],['r','2.10',1539,1022],['r','1.80',1564,1049,1],['r','2.00',1541,1079],['r','8.30',1564,1197,1],['r','1.80',1461,1280],['r','1.60',1454,1299,1],
            ['y','7.62',1732,1165],['y','7.715',1795,1169,1],['y','5.60',1996,1134],['y','7.715',2089,1169,1],['y','2.45',2066,1022],['r','2.75',1868,1021],['r','2.65',1973,1021],['r','2.60',1907,1068,1],['r','2.60',1940,1068,1],['r','30.55',1995,994],
            ['b','3.60',2183,1134],['b','7.715',2235,1169,1],['r','3.50',2309,1024],['r','2.40',2320,1067,1],['r','0.90',2270,1096,1],['r','1.20',2282,1097],['r','7.65',2410,1134],['r','8.30',2524,1197,1],
            ['r','4.10',2650,994],['r','1.90',2710,985,1],['r','1.10',2555,1046,1],['r','3.65',2643,1092],['r','7.55',2615,1166,1]
        ];

        document.getElementById('devices').innerHTML = Object.entries(devices).map(([name, [fill, ink, points]]) =>
            points.map(([x, y]) => `<rect x="${x - 7.5}" y="${y - 7.5}" width="15.5" height="15" fill="${fill}"/><text x="${x - 7}" y="${y + 2}" fill="${ink}" textLength="${/^(POE|FAN|PFM)$/.test(name) ? 14 : 11.5}" lengthAdjust="spacingAndGlyphs">${name}</text>`).join('')
        ).join('');

        document.getElementById('dims').innerHTML = dims.map(([c, t, x, y, v]) =>
            `<text class="i${c}" x="${x}" y="${y + 2}"${v ? ` transform="rotate(-90 ${x} ${y})"` : ''}>${t}</text>`
        ).join('');
    </script>
</body>
</html>
